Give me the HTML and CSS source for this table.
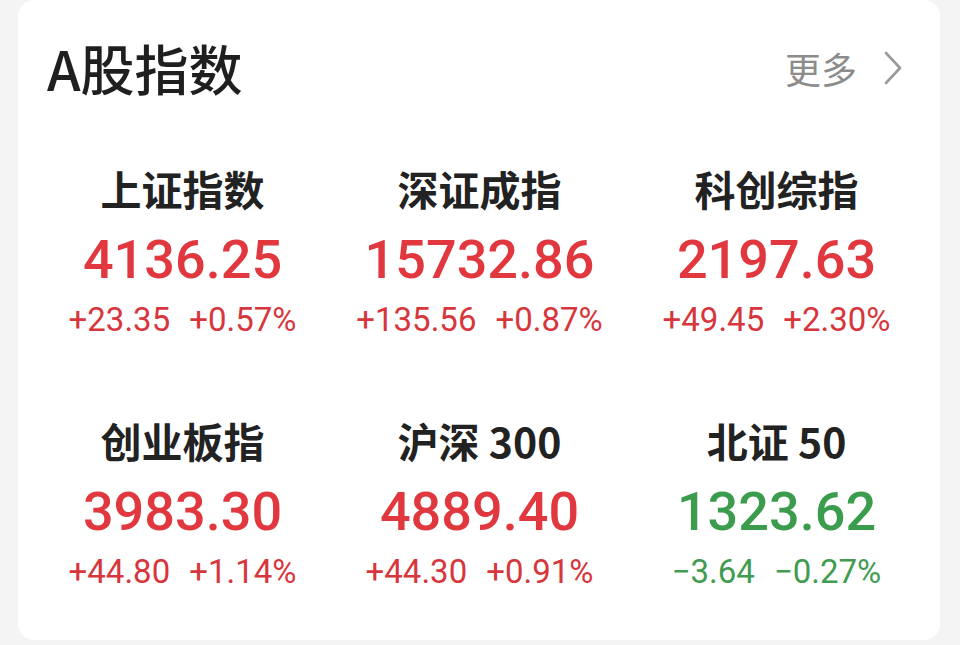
FILE: index.html
```html
<!DOCTYPE html>
<html lang="zh-CN">
<head>
<meta charset="utf-8">
<title>A股指数</title>
<link rel="stylesheet" href="styles.css">
</head>
<body>
<div class="card">
  <div class="header">
    <div class="title">A股指数</div>
    <div class="more">
      <span>更多</span>
      <svg class="chev" width="20" height="34" viewBox="0 0 20 34"><path d="M3 2 L17 17 L3 32" fill="none" stroke="#9a9a9a" stroke-width="2.6" stroke-linecap="round" stroke-linejoin="round"/></svg>
    </div>
  </div>
  <div class="grid">
    <div class="item up">
      <div class="name">上证指数</div>
      <div class="price">4136.25</div>
      <div class="change"><span>+23.35</span><span>+0.57%</span></div>
    </div>
    <div class="item up">
      <div class="name">深证成指</div>
      <div class="price">15732.86</div>
      <div class="change"><span>+135.56</span><span>+0.87%</span></div>
    </div>
    <div class="item up">
      <div class="name">科创综指</div>
      <div class="price">2197.63</div>
      <div class="change"><span>+49.45</span><span>+2.30%</span></div>
    </div>
    <div class="item up">
      <div class="name">创业板指</div>
      <div class="price">3983.30</div>
      <div class="change"><span>+44.80</span><span>+1.14%</span></div>
    </div>
    <div class="item up">
      <div class="name">沪深 300</div>
      <div class="price">4889.40</div>
      <div class="change"><span>+44.30</span><span>+0.91%</span></div>
    </div>
    <div class="item down">
      <div class="name">北证 50</div>
      <div class="price">1323.62</div>
      <div class="change"><span>−3.64</span><span>−0.27%</span></div>
    </div>
  </div>
</div>
</body>
</html>
```

FILE: styles.css
```css
html, body {
  margin: 0;
  padding: 0;
  background: #f4f4f4;
}
body {
  width: 960px;
  height: 645px;
  overflow: hidden;
  font-family: "Noto Sans CJK SC", "Noto Sans", sans-serif;
}
.card {
  margin-left: 18px;
  width: 922px;
  height: 640px;
  box-sizing: border-box;
  background: #ffffff;
  border-radius: 16px;
  padding: 38px 37px 0 16px;
}
.header {
  display: flex;
  align-items: center;
  justify-content: space-between;
  height: 60px;
  padding-left: 13px;
}
.title {
  font-size: 54px;
  line-height: 60px;
  font-weight: 500;
  color: #1f1f1f;
}
.more {
  display: flex;
  align-items: center;
  gap: 26px;
  font-size: 36px;
  line-height: 60px;
  color: #8c8c8c;
}
.chev {
  display: block;
}
.grid {
  margin-top: 65px;
  width: 891px;
  display: grid;
  grid-template-columns: repeat(3, 297px);
  row-gap: 75px;
}
.item {
  display: flex;
  flex-direction: column;
  align-items: center;
}
.name {
  font-size: 41px;
  line-height: 50px;
  font-weight: 700;
  color: #222222;
}
.price {
  margin-top: 15px;
  font-family: Roboto, "Noto Sans", sans-serif;
  font-size: 54px;
  line-height: 64px;
  font-weight: 500;
}
.change {
  margin-top: 8px;
  display: flex;
  gap: 19px;
  font-family: Roboto, "Noto Sans", sans-serif;
  font-size: 33px;
  line-height: 40px;
  font-weight: 400;
}
.up .price { color: #e0383e; }
.up .change { color: #d7363d; }
.down .price { color: #3b9c4d; }
.down .change { color: #419c51; }
```
